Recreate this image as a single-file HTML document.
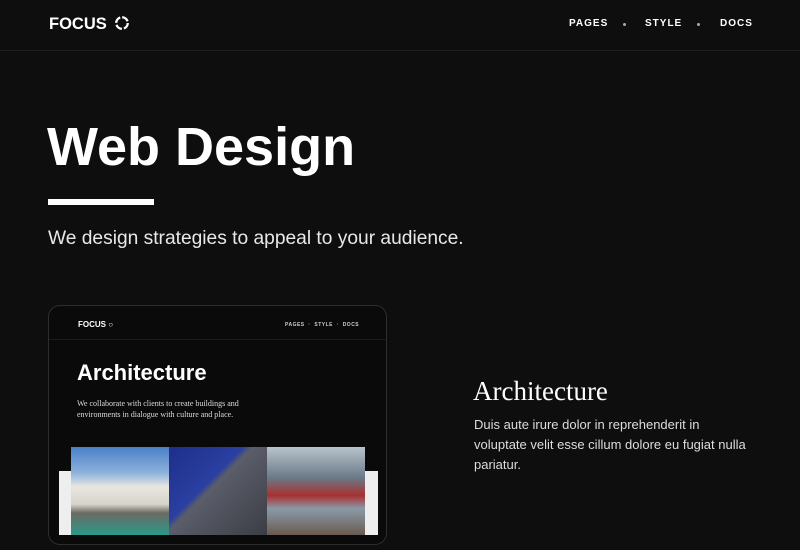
<!DOCTYPE html>
<html><head><meta charset="utf-8"><style>
*{margin:0;padding:0;box-sizing:border-box}
body{width:800px;height:550px;overflow:hidden;background:#0f0e0f;color:#fff;font-family:"Liberation Sans",sans-serif;position:relative}
.hdr{position:absolute;left:0;top:0;width:800px;height:51px;border-bottom:1px solid #1f1e1f}
.logo{position:absolute;left:49px;top:15px;font-size:16.5px;font-weight:bold;letter-spacing:0}
.nav{position:absolute;top:18px;font-size:10px;font-weight:bold;letter-spacing:1px}
.dot{position:absolute;top:23px;width:3px;height:3px;background:#aaa;border-radius:50%}
h1{position:absolute;left:47px;top:116px;font-size:54px;font-weight:bold;letter-spacing:0}
.bar{position:absolute;left:48px;top:199px;width:106px;height:6px;background:#fff}
.sub{position:absolute;left:48px;top:228px;font-size:19.2px;color:#e8e8e8}
.card{position:absolute;left:48px;top:305px;width:339px;height:240px;border:1px solid #2e2d2e;border-radius:12px;background:#0b0a0b;overflow:hidden}
.ch{position:absolute;left:0;top:0;width:100%;height:34px;border-bottom:1px solid #1c1b1c}
.band{position:absolute;left:10px;top:165px;width:319px;height:64px;background:#eee}
.img{position:absolute;top:141px;height:88px;width:98px}
h2{position:absolute;left:473px;top:376px;font-family:"Liberation Serif",serif;font-weight:normal;font-size:27px}
.p{position:absolute;left:474px;top:415px;width:300px;font-size:13px;line-height:20px;color:#ddd;white-space:nowrap}
</style></head><body>
<div class="hdr">
<div class="logo">FOCUS <svg width="16" height="16" viewBox="0 0 18 18" style="vertical-align:-2px;margin-left:3px"><circle cx="9" cy="9" r="6.5" fill="none" stroke="#fff" stroke-width="2.6" stroke-dasharray="8 2.2"/></svg></div>
<div class="nav" style="left:569px">PAGES</div><div class="dot" style="left:623px"></div>
<div class="nav" style="left:645px">STYLE</div><div class="dot" style="left:697px"></div>
<div class="nav" style="left:720px">DOCS</div>
</div>
<h1>Web Design</h1>
<div class="bar"></div>
<div class="sub">We design strategies to appeal to your audience.</div>
<div class="card">
<div class="ch">
<div style="position:absolute;left:29px;top:14px;font-size:8px;font-weight:bold">FOCUS ○</div>
<div style="position:absolute;left:236px;top:16px;font-size:5px;font-weight:bold;letter-spacing:.5px;color:#ccc">PAGES &nbsp;·&nbsp; STYLE &nbsp;·&nbsp; DOCS</div>
</div>
<div style="position:absolute;left:28px;top:54px;font-size:22px;font-weight:bold">Architecture</div>
<div style="position:absolute;left:28px;top:92px;font-family:'Liberation Serif',serif;font-size:8px;line-height:11px;color:#ddd">We collaborate with clients to create buildings and<br>environments in dialogue with culture and place.</div>
<div class="band"></div>
<div class="img" style="left:22px;background:linear-gradient(180deg,#4a7fc8 0%,#8fb4dd 30%,#e8e6e0 45%,#d8d4cc 65%,#6a6a62 75%,#2a9a8a 100%)"></div>
<div class="img" style="left:120px;background:linear-gradient(135deg,#1e2f8a 0%,#2a3fa0 40%,#5a5d6a 45%,#3c3d44 100%)"></div>
<div class="img" style="left:218px;background:linear-gradient(180deg,#b8c4cc 0%,#6a7a88 35%,#a83030 55%,#8a9aa8 70%,#6a5a50 100%)"></div>
</div>
<h2>Architecture</h2>
<div class="p">Duis aute irure dolor in reprehenderit in<br>voluptate velit esse cillum dolore eu fugiat nulla<br>pariatur.</div>
</body></html>
